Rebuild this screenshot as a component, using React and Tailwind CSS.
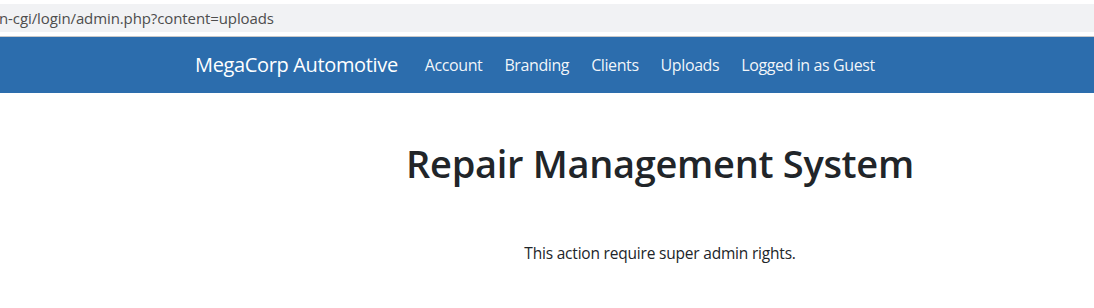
export default function App() {
  const links = ['Account', 'Branding', 'Clients', 'Uploads', 'Logged in as Guest'];

  return (
    <div className="w-[1094px] h-[308px] bg-white overflow-hidden" style={{ fontFamily: '"Open Sans", "Noto Sans", sans-serif' }}>
      {/* address bar strip */}
      <div className="pt-[4px] bg-white">
        <div className="h-[28px] bg-[#f1f2f4] flex items-center text-[15px] text-[#4d4d4d] -ml-[1px] tracking-[-0.1px]">
          n-cgi/login/admin.php?content=uploads
        </div>
      </div>
      <div className="h-[4px] bg-white" />
      <div className="h-[1px] bg-[#c8c8c8]" />

      {/* navbar */}
      <nav className="h-[56px] bg-[#2c6dad] flex items-center pl-[195px] text-white">
        <span className="text-[20px] mr-[27px] tracking-[-0.35px]">MegaCorp Automotive</span>
        <ul className="flex items-center gap-[22px] text-[16px] tracking-[-0.4px]">
          {links.map((l) => (
            <li key={l} className="text-white/95">{l}</li>
          ))}
        </ul>
      </nav>

      {/* content */}
      <main className="pl-[226px] text-center text-[#212529]">
        <h1 className="mt-[48px] text-[38px] font-semibold leading-[1.2] tracking-[-0.3px]">Repair Management System</h1>
        <p className="mt-[55px] text-[15.5px] tracking-[-0.2px]">This action require super admin rights.</p>
      </main>
    </div>
  );
}
